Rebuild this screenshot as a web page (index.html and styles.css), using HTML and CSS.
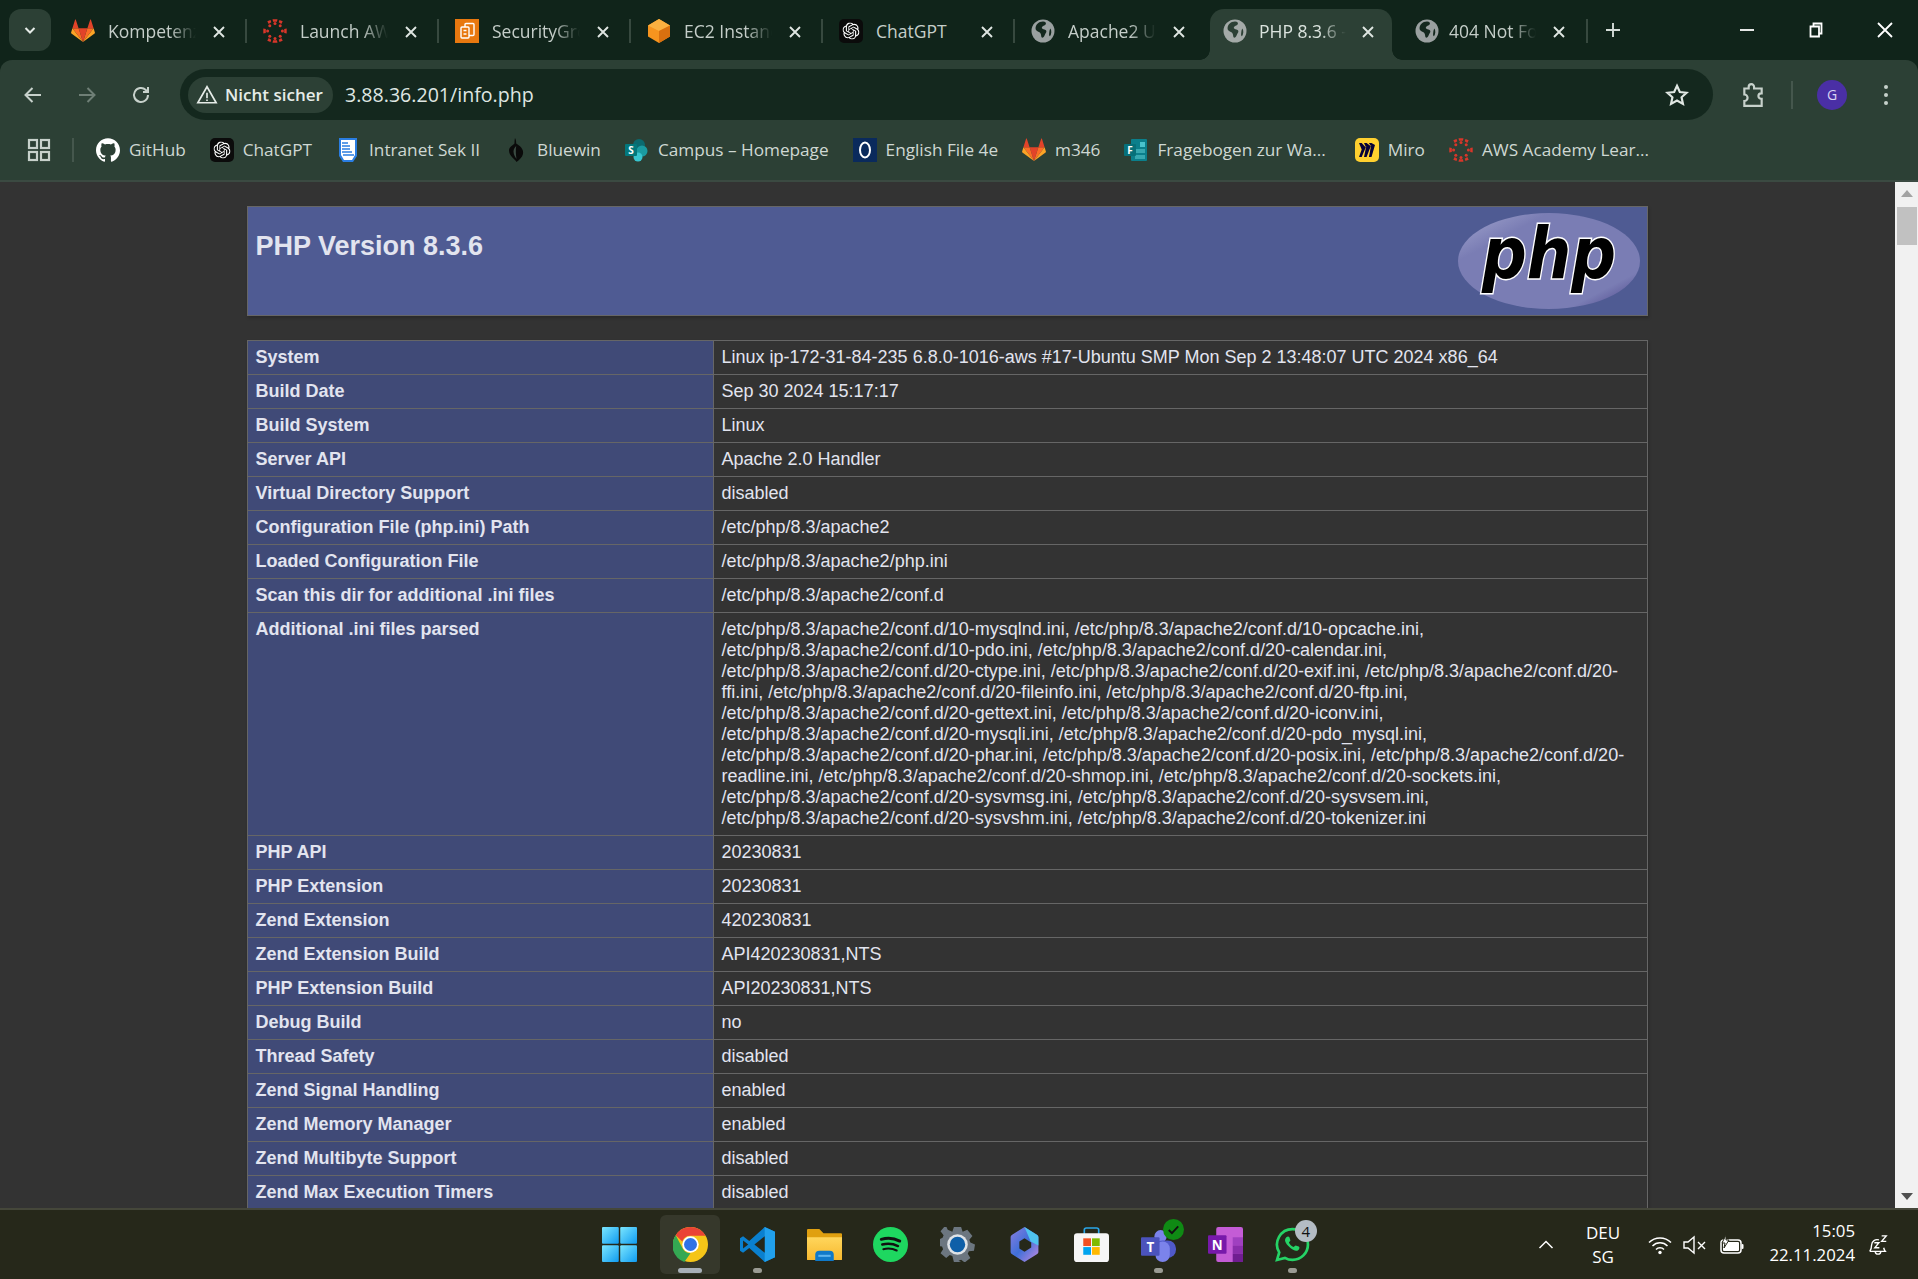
FILE: index.html
```html
<!DOCTYPE html>
<html lang="de">
<head>
<meta charset="utf-8">
<title>PHP 8.3.6 - phpinfo()</title>
<link rel="stylesheet" href="styles.css">
</head>
<body>
<svg class="defs" aria-hidden="true">
  <defs>
    <linearGradient id="winG" x1="0" y1="0" x2="1" y2="1"><stop offset="0" stop-color="#7be6ff"/><stop offset="1" stop-color="#0f9bf0"/></linearGradient>
    <linearGradient id="fileG" x1="0" y1="0" x2="0" y2="1"><stop offset="0" stop-color="#ffd65c"/><stop offset="1" stop-color="#f7b92f"/></linearGradient>
    <linearGradient id="copG" x1="0" y1="0" x2="1" y2="1"><stop offset="0" stop-color="#8a7fe0"/><stop offset=".5" stop-color="#3f6fd8"/><stop offset="1" stop-color="#c48be0"/></linearGradient>
    <linearGradient id="phpG" x1="0" y1="0" x2="1" y2="1"><stop offset="0" stop-color="#a5a8d0"/><stop offset=".25" stop-color="#7a7db4"/><stop offset=".8" stop-color="#7a7db4"/><stop offset="1" stop-color="#443a82"/></linearGradient>
    <symbol id="gitlab" viewBox="0 0 24 24">
      <path fill="#e24329" d="M12 23 16.4 9.2H7.6z"/>
      <path fill="#fc6d26" d="M12 23 7.6 9.2H1.4z"/>
      <path fill="#fca326" d="M1.4 9.2.1 13.4c-.1.4 0 .8.3 1L12 23z"/>
      <path fill="#e24329" d="M1.4 9.2h6.2L4.9.9c-.1-.4-.7-.4-.9 0z"/>
      <path fill="#fc6d26" d="M12 23l4.4-13.8h6.2z"/>
      <path fill="#fca326" d="M22.6 9.2l1.3 4.2c.1.4 0 .8-.3 1L12 23z"/>
      <path fill="#e24329" d="M22.6 9.2h-6.2L19.1.9c.1-.4.7-.4.9 0z"/>
    </symbol>
    <symbol id="canvas" viewBox="0 0 24 24">
      <g fill="#d8362a">
        <circle cx="12" cy="4.6" r="1.500"/><circle cx="12" cy="19.400" r="1.500"/><circle cx="4.600" cy="12" r="1.500"/><circle cx="19.400" cy="12" r="1.500"/>
        <circle cx="6.800" cy="6.800" r="1.500"/><circle cx="17.200" cy="6.800" r="1.500"/><circle cx="6.800" cy="17.200" r="1.500"/><circle cx="17.200" cy="17.200" r="1.500"/>
        <path d="M9.500.3l5 0-.6 2.500h-3.800zM9.500 23.700l5 0-.6-2.500h-3.800zM.3 9.500v5l2.500-.6v-3.800zM23.700 9.500v5l-2.500-.6v-3.800z"/>
        <path d="M4.300 2.300 7.500 1 8.300 3.200 5.700 5zM19.700 2.300 16.500 1l-.8 2.200L18.300 5zM4.300 21.700 7.500 23l.8-2.200L5.700 19zM19.700 21.700 16.500 23l-.8-2.200L18.300 19z"/>
      </g>
    </symbol>
    <symbol id="aws-sg" viewBox="0 0 24 24">
      <rect width="24" height="24" fill="#e8780f"/>
      <g fill="none" stroke="#fff" stroke-width="1.400"><rect x="10" y="4.500" width="9" height="12" rx="1"/><rect x="6" y="8" width="8" height="11" rx="1" fill="#e8780f"/><path d="M8.500 11.500h3M8.500 15h3"/></g>
    </symbol>
    <symbol id="ec2" viewBox="0 0 24 24">
      <path fill="#f7941e" d="M12 0 23 6.500v11L12 24 1 17.500v-11z"/>
      <path fill="#fbb040" d="M12 0 23 6.500 12 12 1 6.500z"/>
      <path fill="#d9700f" d="M12 12 23 6.500v11L12 24z"/>
    </symbol>
    <symbol id="openai" viewBox="0 0 24 24">
      <path d="M22.2819 9.8211a5.9847 5.9847 0 0 0-.5157-4.9108 6.0462 6.0462 0 0 0-6.5098-2.9A6.0651 6.0651 0 0 0 4.9807 4.1818a5.9847 5.9847 0 0 0-3.9977 2.9 6.0462 6.0462 0 0 0 .7427 7.0966 5.98 5.98 0 0 0 .511 4.9107 6.051 6.051 0 0 0 6.5146 2.9001A5.9847 5.9847 0 0 0 13.2599 24a6.0557 6.0557 0 0 0 5.7718-4.2058 5.9894 5.9894 0 0 0 3.9977-2.9001 6.0557 6.0557 0 0 0-.7475-7.0729zm-9.022 12.6081a4.4755 4.4755 0 0 1-2.8764-1.0408l.1419-.0804 4.7783-2.7582a.7948.7948 0 0 0 .3927-.6813v-6.7369l2.02 1.1686a.071.071 0 0 1 .038.052v5.5826a4.504 4.504 0 0 1-4.4945 4.4944zm-9.6607-4.1254a4.4708 4.4708 0 0 1-.5346-3.0137l.142.0852 4.783 2.7582a.7712.7712 0 0 0 .7806 0l5.8428-3.3685v2.3324a.0804.0804 0 0 1-.0332.0615L9.74 19.9502a4.4992 4.4992 0 0 1-6.1408-1.6464zM2.3408 7.8956a4.485 4.485 0 0 1 2.3655-1.9728V11.6a.7664.7664 0 0 0 .3879.6765l5.8144 3.3543-2.0201 1.1685a.0757.0757 0 0 1-.071 0l-4.8303-2.7865A4.504 4.504 0 0 1 2.3408 7.872zm16.5963 3.8558L13.1038 8.364 15.1192 7.2a.0757.0757 0 0 1 .071 0l4.8303 2.7913a4.4944 4.4944 0 0 1-.6765 8.1042v-5.6772a.79.79 0 0 0-.407-.667zm2.0107-3.0231l-.142-.0852-4.7735-2.7818a.7759.7759 0 0 0-.7854 0L9.409 9.2297V6.8974a.0662.0662 0 0 1 .0284-.0615l4.8303-2.7866a4.4992 4.4992 0 0 1 6.6802 4.66zM8.3065 12.863l-2.02-1.1638a.0804.0804 0 0 1-.038-.0567V6.0742a4.4992 4.4992 0 0 1 7.3757-3.4537l-.142.0805L8.704 5.459a.7948.7948 0 0 0-.3927.6813zm1.0976-2.3654l2.602-1.4998 2.6069 1.4998v2.9994l-2.5974 1.4997-2.6067-1.4997Z"/>
    </symbol>
    <symbol id="chatgpt" viewBox="0 0 24 24">
      <rect width="24" height="24" rx="5" fill="#0b0b0b"/>
      <use href="#openai" x="3.500" y="3.500" width="17" height="17" fill="#fff"/>
    </symbol>
    <symbol id="globe" viewBox="0 0 24 24">
      <circle cx="12" cy="12" r="11.500" fill="#9aa0a0"/>
      <path fill="#14281e" d="M12 2.600c2.600 0 3.600 1.400 2.600 3-.7 1.200-3.400 1.200-3.800 2.900-.3 1.200 1.400 1.700 2.600 2 2 .4 2.600 2 1.400 3.600-.9 1.200-1 3-2.400 4.200-1.200 1-2 .4-2.200-1.200-.2-1.800-.4-3-2.200-4-1.500-.9-3.200-1.500-3.400-3.100C4.300 6 7.500 2.600 12 2.600z"/>
      <path fill="#14281e" d="M19.500 9.500c1.300 2.500 1 5.500-.5 7.800-.7-.4-1.200-1.800-.8-3.400.3-1.400.2-3.400 1.300-4.400z"/>
    </symbol>
    <symbol id="globe-a" viewBox="0 0 24 24">
      <circle cx="12" cy="12" r="11.500" fill="#a4aaa8"/>
      <path fill="#2c4035" d="M12 2.600c2.600 0 3.600 1.400 2.600 3-.7 1.200-3.400 1.200-3.800 2.900-.3 1.200 1.400 1.700 2.600 2 2 .4 2.600 2 1.400 3.600-.9 1.200-1 3-2.400 4.200-1.200 1-2 .4-2.200-1.200-.2-1.800-.4-3-2.200-4-1.500-.9-3.200-1.500-3.400-3.100C4.300 6 7.500 2.600 12 2.600z"/>
      <path fill="#2c4035" d="M19.500 9.500c1.300 2.500 1 5.500-.5 7.800-.7-.4-1.200-1.800-.8-3.400.3-1.400.2-3.400 1.300-4.400z"/>
    </symbol>
    <symbol id="x" viewBox="0 0 14 14"><path d="M2 2l10 10M12 2 2 12" fill="none" stroke="currentColor" stroke-width="1.900"/></symbol>
  </defs>
</svg>

<header class="tabstrip">
  <button class="tab-search"><svg viewBox="0 0 14 14" class="i14"><path d="M2.500 5 7 9.500 11.500 5" fill="none" stroke="#e6ece8" stroke-width="2"/></svg></button>
  <div class="tab"><svg class="fav"><use href="#gitlab"/></svg><span class="tab-title">Kompetenzen</span><svg class="close"><use href="#x"/></svg></div>
  <div class="tab"><svg class="fav"><use href="#canvas"/></svg><span class="tab-title">Launch AWS</span><svg class="close"><use href="#x"/></svg></div>
  <div class="tab"><svg class="fav"><use href="#aws-sg"/></svg><span class="tab-title">SecurityGroups</span><svg class="close"><use href="#x"/></svg></div>
  <div class="tab"><svg class="fav"><use href="#ec2"/></svg><span class="tab-title">EC2 Instances</span><svg class="close"><use href="#x"/></svg></div>
  <div class="tab"><svg class="fav"><use href="#chatgpt"/></svg><span class="tab-title tab-title-full">ChatGPT</span><svg class="close"><use href="#x"/></svg></div>
  <div class="tab tab-before-active"><svg class="fav"><use href="#globe"/></svg><span class="tab-title">Apache2 Ubuntu</span><svg class="close"><use href="#x"/></svg></div>
  <div class="tab tab-active"><svg class="fav"><use href="#globe-a"/></svg><span class="tab-title">PHP 8.3.6 - phpinfo()</span><svg class="close"><use href="#x"/></svg></div>
  <div class="tab tab-last"><svg class="fav"><use href="#globe"/></svg><span class="tab-title">404 Not Found</span><svg class="close"><use href="#x"/></svg></div>
  <svg class="newtab" viewBox="0 0 16 16"><path d="M8 1v14M1 8h14" stroke="#d5ddd8" stroke-width="1.900" fill="none"/></svg>
  <div class="winctl">
    <svg class="wbtn" viewBox="0 0 16 16"><path d="M1 8h14" stroke="#fff" stroke-width="1.800"/></svg>
    <svg class="wbtn" viewBox="0 0 16 16"><path d="M2.500 4.500h8.500v10H2.500zM5.500 4.500V1.500h8v10H11" fill="none" stroke="#fff" stroke-width="1.800"/></svg>
    <svg class="wbtn" viewBox="0 0 16 16"><path d="M1 1l14 14M15 1 1 15" stroke="#fff" stroke-width="1.800"/></svg>
  </div>
</header>

<nav class="toolbar">
  <div class="navrow">
    <svg class="navbtn" viewBox="0 0 24 24"><path d="M20 12H5M11.500 5 4.500 12l7 7" fill="none" stroke="#c7d1cb" stroke-width="2"/></svg>
    <svg class="navbtn" viewBox="0 0 24 24"><path d="M4 12h15M12.500 5l7 7-7 7" fill="none" stroke="#6f7f76" stroke-width="2"/></svg>
    <svg class="navbtn" viewBox="0 0 24 24"><path d="M19 12a7 7 0 1 1-2.200-5.100L19 9M19 4v5h-5" fill="none" stroke="#c7d1cb" stroke-width="2"/></svg>
    <div class="omnibox">
      <div class="chip">
        <svg class="warn" viewBox="0 0 24 24"><path d="M12 3 22 20.500H2zM12 9.500v6M12 17v1.500" fill="none" stroke="#e6ece8" stroke-width="1.800"/></svg>
        <span>Nicht sicher</span>
      </div>
      <span class="url">3.88.36.201/info.php</span>
      <svg class="star" viewBox="0 0 24 24"><path d="M12 3.500l2.600 5.700 6.200.7-4.600 4.200 1.300 6.100-5.500-3.100-5.500 3.100 1.300-6.100L3.200 9.900l6.200-.7z" fill="none" stroke="#e0e7e3" stroke-width="2"/></svg>
    </div>
    <svg class="ext" viewBox="0 0 24 24"><path d="M4 6h4V4.500a2.500 2.500 0 0 1 5 0V6h7v4.500h-.5a2.500 2.500 0 0 0 0 5H20V22H4v-4.500a3 3 0 0 0 0-6z" fill="none" stroke="#c7d1cb" stroke-width="2"/></svg>
    <span class="vsep"></span>
    <span class="avatar">G</span>
    <svg class="kebab" viewBox="0 0 6 24"><circle cx="3" cy="4" r="2" fill="#c7d1cb"/><circle cx="3" cy="12" r="2" fill="#c7d1cb"/><circle cx="3" cy="20" r="2" fill="#c7d1cb"/></svg>
  </div>
  <div class="bookmarks">
    <svg class="apps" viewBox="0 0 24 24"><g fill="none" stroke="#c7d1cb" stroke-width="2.200"><rect x="2" y="2" width="8" height="8"/><rect x="14" y="2" width="8" height="8"/><rect x="2" y="14" width="8" height="8"/><rect x="14" y="14" width="8" height="8"/></g></svg>
    <span class="vsep vsep-bm"></span>
    <a class="bm"><svg class="bmi" viewBox="0 0 24 24"><path fill="#fff" d="M12 .297c-6.630 0-12 5.373-12 12 0 5.303 3.438 9.800 8.205 11.385.6.113.82-.258.82-.577 0-.285-.01-1.040-.015-2.040-3.338.724-4.042-1.610-4.042-1.610C4.422 18.070 3.633 17.700 3.633 17.700c-1.087-.744.084-.729.084-.729 1.205.084 1.838 1.236 1.838 1.236 1.070 1.835 2.809 1.305 3.495.998.108-.776.417-1.305.760-1.605-2.665-.3-5.466-1.332-5.466-5.930 0-1.310.465-2.380 1.235-3.220-.135-.303-.54-1.523.105-3.176 0 0 1.005-.322 3.300 1.230.960-.267 1.980-.399 3-.405 1.020.006 2.040.138 3 .405 2.280-1.552 3.285-1.230 3.285-1.230.645 1.653.24 2.873.12 3.176.765.840 1.230 1.910 1.230 3.220 0 4.610-2.805 5.625-5.475 5.920.42.36.81 1.096.81 2.220 0 1.606-.015 2.896-.03 3.286 0 .315.21.69.825.57C20.565 22.092 24 17.592 24 12.297c0-6.627-5.373-12-12-12"/></svg>GitHub</a>
    <a class="bm"><svg class="bmi"><use href="#chatgpt"/></svg>ChatGPT</a>
    <a class="bm"><svg class="bmi" viewBox="0 0 24 24"><path fill="#2a7de1" d="M3 0h18v18l-4 6H7l-4-6z"/><path fill="#fff" d="M5 2h14v15l-3 5H8l-3-5z"/><path stroke="#2a7de1" stroke-width="1.500" d="M6 5h6M6 8h8M6 11h8M6 14h10M7 17h11"/></svg>Intranet Sek II</a>
    <a class="bm"><svg class="bmi" viewBox="0 0 24 24"><path fill="#0a0a0a" d="M11 0c1.500 2.500 1 4 1.200 5.500C16 8 20 11 19 16c-.7 3.500-4 6-6.500 8-1.500-3-7.500-6-7.500-11.500C5 9 8.500 7.500 10.500 5.500 10.600 3.500 10.500 2 11 0z"/><path fill="#3a4a42" d="M12.200 8c-.6 4-.4 8 .3 13-.8-1.500-3-4-3-7.500 0-2.500 1.500-4.200 2.700-5.500z"/></svg>Bluewin</a>
    <a class="bm"><svg class="bmi" viewBox="0 0 24 24"><circle cx="14" cy="7" r="6" fill="#0b6a6f"/><circle cx="17" cy="13" r="5.500" fill="#1a9ba1"/><circle cx="13" cy="19" r="4.500" fill="#37c6d0"/><rect x="0" y="6" width="12" height="12" rx="1" fill="#03787c"/><text x="6" y="15.500" class="ictext">S</text></svg>Campus – Homepage</a>
    <a class="bm"><svg class="bmi" viewBox="0 0 24 24"><rect width="24" height="24" fill="#0a2a5c"/><ellipse cx="12" cy="12" rx="5" ry="7.500" fill="none" stroke="#fff" stroke-width="2"/></svg>English File 4e</a>
    <a class="bm"><svg class="bmi"><use href="#gitlab"/></svg>m346</a>
    <a class="bm bm-gap"><svg class="bmi" viewBox="0 0 24 24"><rect x="7" y="1" width="16" height="22" rx="1" fill="#0b7f8b"/><rect x="16" y="4" width="5" height="5" fill="#49c2cc"/><rect x="11" y="11" width="10" height="4" fill="#37a8b0"/><rect x="11" y="17" width="10" height="4" fill="#37a8b0"/><rect x="0" y="6" width="12" height="12" rx="1" fill="#077079"/><text x="6" y="15.500" class="ictext">F</text></svg>Fragebogen zur Wa...</a>
    <a class="bm"><svg class="bmi" viewBox="0 0 24 24"><rect width="24" height="24" rx="5" fill="#ffd02f"/><path d="M16.500 5h-2.600l2.300 3.500L11.600 5H9l2.300 5L6.700 5H4l2.700 6.500L4 19h2.700l4.600-11-2.300 11h2.600l4.600-12-2.300 12h2.600L20 7z" fill="#050038"/></svg>Miro</a>
    <a class="bm"><svg class="bmi"><use href="#canvas"/></svg>AWS Academy Lear...</a>
  </div>
</nav>

<div class="viewport">
  <main class="page">
    <table class="info info-head">
      <tr><td class="h">
        <svg class="phplogo" viewBox="0 0 182 96">
          <ellipse cx="91" cy="48" rx="91" ry="48" fill="url(#phpG)"/>
          <text x="91" y="65" class="phptext" textLength="134" lengthAdjust="spacingAndGlyphs">php</text>
        </svg>
        <h1>PHP Version 8.3.6</h1>
      </td></tr>
    </table>
    <table class="info">
      <tr><td class="e">System</td><td class="v">Linux ip-172-31-84-235 6.8.0-1016-aws #17-Ubuntu SMP Mon Sep 2 13:48:07 UTC 2024 x86_64</td></tr>
      <tr><td class="e">Build Date</td><td class="v">Sep 30 2024 15:17:17</td></tr>
      <tr><td class="e">Build System</td><td class="v">Linux</td></tr>
      <tr><td class="e">Server API</td><td class="v">Apache 2.0 Handler</td></tr>
      <tr><td class="e">Virtual Directory Support</td><td class="v">disabled</td></tr>
      <tr><td class="e">Configuration File (php.ini) Path</td><td class="v">/etc/php/8.3/apache2</td></tr>
      <tr><td class="e">Loaded Configuration File</td><td class="v">/etc/php/8.3/apache2/php.ini</td></tr>
      <tr><td class="e">Scan this dir for additional .ini files</td><td class="v">/etc/php/8.3/apache2/conf.d</td></tr>
      <tr><td class="e">Additional .ini files parsed</td><td class="v">/etc/php/8.3/apache2/conf.d/10-mysqlnd.ini, /etc/php/8.3/apache2/conf.d/10-opcache.ini, /etc/php/8.3/apache2/conf.d/10-pdo.ini, /etc/php/8.3/apache2/conf.d/20-calendar.ini, /etc/php/8.3/apache2/conf.d/20-ctype.ini, /etc/php/8.3/apache2/conf.d/20-exif.ini, /etc/php/8.3/apache2/conf.d/20-ffi.ini, /etc/php/8.3/apache2/conf.d/20-fileinfo.ini, /etc/php/8.3/apache2/conf.d/20-ftp.ini, /etc/php/8.3/apache2/conf.d/20-gettext.ini, /etc/php/8.3/apache2/conf.d/20-iconv.ini, /etc/php/8.3/apache2/conf.d/20-mysqli.ini, /etc/php/8.3/apache2/conf.d/20-pdo_mysql.ini, /etc/php/8.3/apache2/conf.d/20-phar.ini, /etc/php/8.3/apache2/conf.d/20-posix.ini, /etc/php/8.3/apache2/conf.d/20-readline.ini, /etc/php/8.3/apache2/conf.d/20-shmop.ini, /etc/php/8.3/apache2/conf.d/20-sockets.ini, /etc/php/8.3/apache2/conf.d/20-sysvmsg.ini, /etc/php/8.3/apache2/conf.d/20-sysvsem.ini, /etc/php/8.3/apache2/conf.d/20-sysvshm.ini, /etc/php/8.3/apache2/conf.d/20-tokenizer.ini</td></tr>
      <tr><td class="e">PHP API</td><td class="v">20230831</td></tr>
      <tr><td class="e">PHP Extension</td><td class="v">20230831</td></tr>
      <tr><td class="e">Zend Extension</td><td class="v">420230831</td></tr>
      <tr><td class="e">Zend Extension Build</td><td class="v">API420230831,NTS</td></tr>
      <tr><td class="e">PHP Extension Build</td><td class="v">API20230831,NTS</td></tr>
      <tr><td class="e">Debug Build</td><td class="v">no</td></tr>
      <tr><td class="e">Thread Safety</td><td class="v">disabled</td></tr>
      <tr><td class="e">Zend Signal Handling</td><td class="v">enabled</td></tr>
      <tr><td class="e">Zend Memory Manager</td><td class="v">enabled</td></tr>
      <tr><td class="e">Zend Multibyte Support</td><td class="v">disabled</td></tr>
      <tr><td class="e">Zend Max Execution Timers</td><td class="v">disabled</td></tr>
      <tr><td class="e">IPv6 Support</td><td class="v">enabled</td></tr>
    </table>
  </main>
  <aside class="scrollbar">
    <span class="arrow arrow-up"></span>
    <span class="thumb"></span>
    <span class="arrow arrow-down"></span>
  </aside>
</div>

<footer class="taskbar">
  <div class="tb-apps">
    <span class="tb tb-win"><svg class="tbi" viewBox="0 0 34 34"><g fill="url(#winG)"><rect width="16.300" height="16.300" rx="1"/><rect x="17.700" width="16.300" height="16.300" rx="1"/><rect y="17.700" width="16.300" height="16.300" rx="1"/><rect x="17.700" y="17.700" width="16.300" height="16.300" rx="1"/></g></svg></span>
    <span class="tb tb-active"><svg class="tbi" viewBox="0 0 34 34">
      <circle cx="17" cy="17" r="17" fill="#f5c518"/>
      <path d="M17 0a17 17 0 0 1 14.700 8.500H17a8.500 8.500 0 0 0-8 5.700L2.600 8A17 17 0 0 1 17 0z" fill="#ea4335"/>
      <path d="M2.600 8 9.800 21.500a8.500 8.500 0 0 0 7.200 4L11 34A17 17 0 0 1 2.600 8z" fill="#34a853"/>
      <circle cx="17" cy="17" r="8" fill="#fff"/><circle cx="17" cy="17" r="6.300" fill="#2f72e6"/>
    </svg><i class="run run-wide"></i></span>
    <span class="tb"><svg class="tbi" viewBox="0 0 34 34"><path d="M24 0 34 4.500v25L24 34 9 20.500 3 25 0 23v-12l3-2 6 4.500z" fill="#0a80cf"/><path d="M24 0 34 4.500v25L24 34z" fill="#21a0ec"/><path d="M24 9v16l-10-8z" fill="#26281a"/><path d="M3 13l5 4-5 4z" fill="#26281a"/></svg><i class="run"></i></span>
    <span class="tb"><svg class="tbi" viewBox="0 0 34 34"><path d="M0 3a1 1 0 0 1 1-1h11l4 4h17a1 1 0 0 1 1 1v25H0z" fill="#e0a010"/><path d="M0 10h34v21a1 1 0 0 1-1 1H1a1 1 0 0 1-1-1z" fill="url(#fileG)"/><path d="M8 33v-6a4 4 0 0 1 4-4h10a4 4 0 0 1 4 4v6z" fill="#0f79c9"/><rect x="11" y="27" width="12" height="2" fill="#5cb4ef"/></svg></span>
    <span class="tb"><svg class="tbi" viewBox="0 0 34 34"><circle cx="17" cy="17" r="17" fill="#1ed760"/><g fill="none" stroke="#111" stroke-linecap="round"><path d="M8 12c6-1.700 12.500-1.200 18 1.700" stroke-width="2.800"/><path d="M9 17c5-1.300 10.500-.9 15.300 1.500" stroke-width="2.400"/><path d="M10 21.500c4.500-1 9-.7 13 1.300" stroke-width="2"/></g></svg></span>
    <span class="tb"><svg class="tbi" viewBox="0 0 34 34"><path d="M13.500 0h7l1.500 4.500 4.500-1.800 5 6-3 3.800 1 2.500 4.500 2-1 6-5 .5-1 2.500 2.500 4-5.500 4.500-3.500-2.800-2.500 1L20.500 34h-7L12 28.200l-2.500-1-3.500 2.800L.5 25.500l2.500-4-1-2.500-5-.5 1-6 4.500-2 1-2.500-3-3.800 5-6L7.500 2.700l4.500 1.800z" fill="#6c7680"/><circle cx="17" cy="17" r="10" fill="#dfe3e7"/><circle cx="17" cy="17" r="7.500" fill="#0e5fa8"/></svg></span>
    <span class="tb"><svg class="tbi" viewBox="0 0 34 34"><path d="M17 0l12 7.500c1 .6 1.500 1.500 1.500 2.500v14c0 1-.5 1.900-1.500 2.500L17 34 5 26.500c-1-.6-1.500-1.500-1.500-2.500V10c0-1 .5-1.900 1.500-2.500z" fill="url(#copG)"/><path d="M17 0l12 7.500c1 .6 1.500 1.500 1.500 2.500v8L23 14z" fill="#4fc3ee"/><path d="M17 11l6.500 4v5L17 24l-5-3.200V14z" fill="#26281a"/></svg></span>
    <span class="tb"><svg class="tbi" viewBox="0 0 34 34"><path d="M10 8V3a2 2 0 0 1 2-2h10a2 2 0 0 1 2 2v5" fill="none" stroke="#2aa6e8" stroke-width="1.600"/><rect y="6" width="34" height="28" rx="3" fill="#f6f6f6"/><rect x="9" y="11" width="7.500" height="7.500" fill="#f25022"/><rect x="17.500" y="11" width="7.500" height="7.500" fill="#7fba00"/><rect x="9" y="19.500" width="7.500" height="7.500" fill="#00a4ef"/><rect x="17.500" y="19.500" width="7.500" height="7.500" fill="#ffb900"/></svg></span>
    <span class="tb"><svg class="tbi" viewBox="0 0 34 34"><circle cx="19" cy="9" r="6" fill="#7b83eb"/><rect x="13" y="13" width="21" height="17" rx="8" fill="#5059c9"/><rect x="14" y="14" width="14" height="20" rx="7" fill="#7b83eb"/><rect y="10" width="18" height="18" rx="1" fill="#4b53bc"/><text x="9" y="24" class="ictext ictext-lg">T</text></svg><svg class="badge-ok" viewBox="0 0 20 20"><circle cx="10" cy="10" r="10" fill="#0f8a14"/><path d="M5.500 10.500 8.500 13.500 14.500 7" fill="none" stroke="#111" stroke-width="1.800"/></svg><i class="run"></i></span>
    <span class="tb"><svg class="tbi" viewBox="0 0 34 34"><rect x="8" width="26" height="34" rx="2" fill="#c45cd6"/><rect x="24" y="10" width="10" height="8" fill="#a040c0"/><rect x="24" y="18" width="10" height="8" fill="#8a2eab"/><rect x="24" y="26" width="10" height="8" fill="#701d91"/><rect y="8" width="18" height="18" rx="1" fill="#7719aa"/><text x="9" y="22" class="ictext ictext-lg">N</text></svg></span>
    <span class="tb"><svg class="tbi" viewBox="0 0 34 34"><path d="M17 2a15 15 0 0 1 0 30c-2.700 0-5.200-.7-7.400-2L2 32l2.100-7.300A15 15 0 0 1 17 2z" fill="none" stroke="#25d366" stroke-width="2.600"/><path d="M11 10c1-1 2.500-1 3 0l1 3-1.500 2c1 2 2.500 3.500 4.500 4.500l2-1.500 3 1c1 .5 1 2 0 3-3 3-7-.5-9.500-3S8 13 11 10z" fill="#25d366"/></svg><em class="badge-n">4</em><i class="run"></i></span>
  </div>
  <div class="tray">
    <svg class="chev" viewBox="0 0 16 16"><path d="M1.500 11 8 4.500 14.500 11" fill="none" stroke="#fff" stroke-width="1.500"/></svg>
    <div class="lang"><span>DEU</span><span>SG</span></div>
    <svg class="tri tri-wifi" viewBox="0 0 24 20"><g fill="none" stroke="#fff" stroke-width="1.500"><path d="M1 7.500a15.500 15.500 0 0 1 22 0M4.500 11a10.500 10.500 0 0 1 15 0M8 14.500a5.500 5.500 0 0 1 8 0"/></g><circle cx="12" cy="17.500" r="1.700" fill="#fff"/></svg>
    <svg class="tri tri-vol" viewBox="0 0 24 20"><path d="M1 7v6h4l6 5V2L5 7zM15 7l7 7M22 7l-7 7" fill="none" stroke="#fff" stroke-width="1.400"/></svg>
    <svg class="tri tri-bat" viewBox="0 0 24 20"><rect x="1" y="5" width="20" height="13" rx="3" fill="none" stroke="#fff" stroke-width="1.500"/><rect x="3" y="7" width="16" height="9" rx="1" fill="#fff"/><rect x="21.500" y="9" width="2" height="5" rx="1" fill="#fff"/><path d="M6 0 2 8h3l-1 5 5-8H6z" fill="#fff" stroke="#26281a"/></svg>
    <div class="clock"><span>15:05</span><span>22.11.2024</span></div>
    <svg class="bell" viewBox="0 0 24 24"><path d="M3 19c1.500-2 2-4 2-7a6 6 0 0 1 8-5.500M3 19h17c-1-1.200-1.500-2.500-1.800-4M9 19a3 3 0 0 0 6 0" fill="none" stroke="#fff" stroke-width="1.500"/><path d="M8 9.500h5L8.500 15H13.500M16 2h5l-5 6h5" fill="none" stroke="#fff" stroke-width="1.500"/></svg>
  </div>
</footer>
</body>
</html>
```

FILE: styles.css
```css
* { box-sizing: border-box; }
html, body { margin: 0; padding: 0; height: 1279px; overflow: hidden; }
body { display: flex; flex-direction: column; background: #10241a; font-family: "Open Sans", "Noto Sans", sans-serif; }
.defs { width: 0; height: 0; display: block; flex: none; }

/* tab strip */
.tabstrip { height: 60px; flex: none; background: #10241a; display: flex; align-items: flex-start; padding: 9px 0 0 9px; color: #c5cec9; }
.tab-search { width: 42px; height: 42px; border: 0; border-radius: 12px; background: #2c4035; display: flex; align-items: center; justify-content: center; padding: 0; margin-right: 4px; }
.i14 { width: 14px; height: 14px; }
.tab { width: 192px; height: 51px; flex: none; display: flex; align-items: flex-start; padding: 10px 0 0 16px; position: relative; }
.tab::after { content: ""; position: absolute; right: 0; top: 10px; width: 2px; height: 24px; background: #37493f; }
.tab-before-active::after { display: none; }
.tab-active { width: 182px; margin: 0 7px 0 3px; padding-left: 13px; background: #2c4035; border-radius: 14px 14px 0 0; color: #dbe3de; }
.tab-active::before, .tab-active::after { content: ""; position: absolute; bottom: 0; top: auto; width: 10px; height: 10px; background: none; }
.tab-active::before { left: -10px; background: radial-gradient(circle at 0 0, transparent 9.5px, #2c4035 10px); }
.tab-active::after { right: -10px; background: radial-gradient(circle at 100% 0, transparent 9.5px, #2c4035 10px); }
.tab-last { width: 189px; }
.fav { width: 24px; height: 24px; flex: none; }
.tab-title { width: 88px; margin-left: 13px; font-size: 17.500px; line-height: 25px; white-space: nowrap; overflow: hidden; -webkit-mask-image: linear-gradient(90deg, #000 70%, transparent 100%); mask-image: linear-gradient(90deg, #000 70%, transparent 100%); }
.tab-title-full { -webkit-mask-image: none; mask-image: none; }
.tab-active .tab-title { width: 87px; margin-left: 12px; }
.tab-last .tab-title { width: 87px; margin-left: 10px; }
.close { width: 14px; height: 14px; margin: 6px 0 0 16px; flex: none; color: #dfe6e2; }
.tab-active .close { margin-left: 15px; }
.newtab { width: 16px; height: 16px; margin: 13px 0 0 17px; flex: none; }
.winctl { margin-left: auto; display: flex; gap: 53px; padding: 13px 25px 0 0; }
.wbtn { width: 16px; height: 16px; flex: none; }

/* toolbar */
.toolbar { height: 122px; flex: none; background: #2c4035; border-radius: 12px 12px 0 0; border-bottom: 2px solid #3b4a42; }
.navrow { height: 69px; display: flex; align-items: center; padding: 9px 0 9px 21px; }
.navbtn { width: 24px; height: 24px; flex: none; margin-right: 30px; }
.omnibox { width: 1533px; height: 51px; margin-left: -3px; border-radius: 26px; background: #14281e; display: flex; align-items: center; padding: 0 23px 0 8px; flex: none; }
.chip { height: 36px; width: 145px; border-radius: 18px; background: #2c4035; display: flex; align-items: center; gap: 7px; padding-left: 8px; color: #e6ece8; font-size: 17px; font-weight: 600; white-space: nowrap; }
.warn { width: 22px; height: 22px; flex: none; }
.url { margin-left: 12px; color: #dfe6e2; font-size: 19.600px; flex: 1; white-space: nowrap; }
.star { width: 26px; height: 26px; flex: none; }
.ext { width: 26px; height: 26px; flex: none; margin-left: 27px; }
.vsep { width: 2px; height: 28px; background: #45574d; flex: none; margin-left: 25px; }
.avatar { width: 30px; height: 30px; flex: none; margin-left: 24px; border-radius: 50%; background: #4a2fa5; color: #d9d3f3; font-size: 14px; display: flex; align-items: center; justify-content: center; }
.kebab { width: 6px; height: 24px; flex: none; margin-left: 36px; }
.bookmarks { height: 51px; display: flex; align-items: center; padding: 0 0 10px 27px; }
.apps { width: 24px; height: 24px; flex: none; }
.vsep-bm { height: 24px; margin-left: 21px; margin-right: 22px; }
.bm { display: flex; align-items: center; gap: 9px; color: #cfd8d3; font-size: 17.200px; white-space: nowrap; margin-right: 24px; flex: none; }
.bm-gap { margin-right: 29px; }
.bmi { width: 24px; height: 24px; flex: none; }
.ictext { font: 700 10px "Open Sans", sans-serif; fill: #fff; text-anchor: middle; }
.ictext-lg { font-size: 13px; }

/* page */
.viewport { flex: 1; min-height: 0; display: flex; background: #333; }
.page { flex: 1; min-width: 0; overflow: hidden; padding-top: 24px; font-family: "Liberation Sans", Arial, sans-serif; font-size: 18px; color: #e2e4ef; background: #333; }
.info { width: 1401px; margin: 0 auto; border-collapse: collapse; table-layout: fixed; box-shadow: 1px 2px 3px rgba(0,0,0,.2); }
.info-head { margin-bottom: 24px; }
.info td { border: 1px solid #666; padding: 6px 7.5px; vertical-align: baseline; overflow-wrap: break-word; line-height: 21px; }
.info td.h { background: #4f5b93; height: 109px; padding-top: 5px; padding-bottom: 5px; font-weight: 700; }
.e { background: #404a77; width: 466px; font-weight: 700; }
.v { background: #333; }
.h h1 { margin: 19px 0 0; font-size: 27px; line-height: 31px; font-weight: 700; }
.phplogo { float: right; width: 182px; height: 96px; margin: 1px 0 0 0; }
.phptext { font: italic 700 72px "DejaVu Sans", sans-serif; fill: #000; stroke: #fff; stroke-width: 3px; paint-order: stroke; text-anchor: middle; }

/* scrollbar */
.scrollbar { width: 23px; flex: none; background: #f1f1f1; display: flex; flex-direction: column; align-items: center; padding: 8px 0; }
.arrow { width: 0; height: 0; border-left: 6px solid transparent; border-right: 6px solid transparent; flex: none; }
.arrow-up { border-bottom: 7px solid #a3a3a3; }
.arrow-down { border-top: 7px solid #505050; margin-top: auto; }
.thumb { width: 20px; height: 38px; background: #c1c1c1; margin-top: 10px; flex: none; }

/* taskbar */
.taskbar { height: 71px; flex: none; background: #26281a; border-top: 2px solid #45473a; display: flex; align-items: center; padding-left: 586px; color: #fff; }
.tb-apps { display: flex; align-items: center; }
.tb { width: 66.900px; height: 59px; flex: none; display: flex; align-items: center; justify-content: center; position: relative; border-radius: 6px; }
.tb-win { margin-right: 4px; }
.tb-active { background: #36382b; width: 60px; margin: 0 3.450px; }
.tbi { width: 35px; height: 35px; flex: none; }
.run { position: absolute; left: 50%; bottom: 1px; width: 9px; height: 5px; margin-left: -4.500px; border-radius: 3px; background: #9a9b93; }
.run-wide { width: 24px; margin-left: -12px; background: #a8b0b8; }
.badge-ok { position: absolute; right: 8px; top: 4px; width: 21px; height: 21px; }
.badge-n { position: absolute; right: 9px; top: 5px; width: 22px; height: 22px; border-radius: 50%; background: #b4bcc4; color: #111; font: 400 15px/22px "Open Sans", sans-serif; text-align: center; }
.tray { margin-left: auto; display: flex; align-items: center; height: 100%; }
.chev { width: 16px; height: 16px; flex: none; margin-right: 29px; }
.lang { display: flex; flex-direction: column; align-items: center; font-size: 17px; line-height: 24px; width: 40px; margin-right: 25px; }
.tri { width: 24px; height: 20px; flex: none; margin-right: 11px; }
.tri-bat { margin-right: 21px; margin-left: 2px; }
.clock { display: flex; flex-direction: column; align-items: flex-end; font-size: 16.800px; line-height: 24px; width: 90px; margin-top: -4px; }
.bell { width: 22px; height: 22px; flex: none; margin: 0 29px 0 12px; }
```
